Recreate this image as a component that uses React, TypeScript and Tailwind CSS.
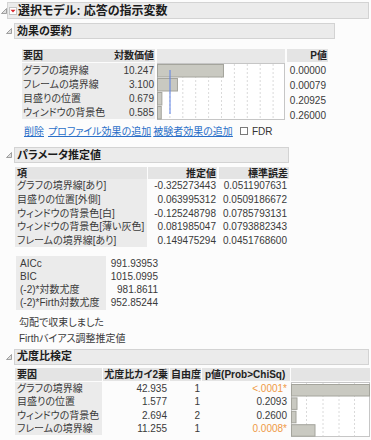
import React from "react";

const FONT =
  "font-['Liberation_Sans','Noto_Sans_CJK_JP',sans-serif] [font-feature-settings:'palt']";

const effects = [
  { name: "グラフの境界線", lw: "10.247", v: 10.247, p: "0.00000" },
  { name: "フレームの境界線", lw: "3.100", v: 3.1, p: "0.00079" },
  { name: "目盛りの位置", lw: "0.679", v: 0.679, p: "0.20925" },
  { name: "ウィンドウの背景色", lw: "0.585", v: 0.585, p: "0.26000" },
];

const params = [
  ["グラフの境界線[あり]", "-0.325273443", "0.0511907631"],
  ["目盛りの位置[外側]", "0.063995312", "0.0509186672"],
  ["ウィンドウの背景色[白]", "-0.125248798", "0.0785793131"],
  ["ウィンドウの背景色[薄い灰色]", "0.081985047", "0.0793882343"],
  ["フレームの境界線[あり]", "0.149475294", "0.0451768600"],
];

const fitStats = [
  ["AICc", "991.93953"],
  ["BIC", "1015.0995"],
  ["(-2)*対数尤度", "981.8611"],
  ["(-2)*Firth対数尤度", "952.85244"],
];

const lrTests = [
  { name: "グラフの境界線", chi: "42.935", df: "1", p: "<.0001*", sig: true, w: 78 },
  { name: "目盛りの位置", chi: "1.577", df: "1", p: "0.2093", sig: false, w: 5.5 },
  { name: "ウィンドウの背景色", chi: "2.694", df: "2", p: "0.2600", sig: false, w: 4.5 },
  { name: "フレームの境界線", chi: "11.255", df: "1", p: "0.0008*", sig: true, w: 23.5 },
];

function Twisty() {
  return (
    <svg width="6" height="6" viewBox="0 0 6 6" className="shrink-0">
      <path d="M5.5 0.5V5.5H0.5Z" fill="#dedede" stroke="#8c8c8c" strokeWidth="0.8" />
    </svg>
  );
}

function RedHotspot() {
  return (
    <svg width="8" height="8" viewBox="0 0 8 8" className="shrink-0">
      <rect x="0.5" y="0.5" width="7" height="7" fill="#fff" stroke="#c4c4c4" />
      <path d="M1.5 2.8H6.5L4 5.6Z" fill="#d8262c" />
    </svg>
  );
}

function Outline({ title, width }: { title: string; width: string }) {
  return (
    <div className="flex items-center ml-[6px]">
      <div className="w-[8px] flex">
        <Twisty />
      </div>
      <div
        className={`h-[16px] ${width} bg-[#ebebeb] border border-[#d3d3d3] flex items-center pl-[2px] font-bold text-[11px] text-[#1c1c1c]`}
      >
        {title}
      </div>
    </div>
  );
}

function EffectChart() {
  const s = 6.44;
  return (
    <svg width="128" height="57" viewBox="0 0 128 57">
      <rect x="0.5" y="0.5" width="127" height="56" fill="#fff" stroke="#c6c6c6" />
      {[1, 2, 3, 4, 5, 6, 7, 8, 9].map((k) => (
        <line
          key={k}
          x1={k * 12.9}
          x2={k * 12.9}
          y1="1"
          y2="56"
          stroke="#d0d0d0"
          strokeWidth="0.8"
          strokeDasharray="2 2"
        />
      ))}
      {effects.map((e, i) => (
        <rect
          key={i}
          x="0.5"
          y={1.5 + i * 14}
          width={e.v * s}
          height="12.5"
          fill="#c9c9c1"
          stroke="#a4a49c"
        />
      ))}
      <line x1="13" x2="13" y1="7" y2="51" stroke="#5b80e6" strokeWidth="1" />
    </svg>
  );
}

function LrChart() {
  return (
    <svg width="79" height="55" viewBox="0 0 79 55">
      <rect x="0.5" y="0.5" width="78" height="54" fill="#fff" stroke="#c6c6c6" />
      {[15.5, 32, 48, 63.5].map((x) => (
        <line
          key={x}
          x1={x}
          x2={x}
          y1="1"
          y2="54"
          stroke="#d0d0d0"
          strokeWidth="0.8"
          strokeDasharray="2 2"
        />
      ))}
      {lrTests.map((r, i) => (
        <rect
          key={i}
          x="0.5"
          y={2.5 + i * 13.4}
          width={r.w}
          height="11.5"
          fill="#c9c9c1"
          stroke="#a4a49c"
        />
      ))}
    </svg>
  );
}

export default function App() {
  return (
    <div
      className={`w-[371px] h-[440px] overflow-hidden whitespace-nowrap bg-[#fcfcfc] text-[10px] text-[#3a3a3a] ${FONT}`}
    >
      {/* title bar */}
      <div className="pt-[2px] flex items-center">
        <div className="w-[7px] flex pl-[1px]">
          <Twisty />
        </div>
        <div className="h-[17px] w-[362px] bg-[#ebebeb] border border-[#d3d3d3] flex items-center gap-[1px] pl-[1px] font-bold text-[12px] text-[#1c1c1c]">
          <RedHotspot />
          <span>選択モデル: 応答の指示変数</span>
        </div>
      </div>

      {/* effect summary */}
      <div className="mt-[4px]">
        <Outline title="効果の要約" width="w-[321px]" />
        <div className="ml-[22px] mt-[10px] flex items-start">
          <div className="w-[133px] flex flex-col gap-[1px]">
            <div className="h-[13px] bg-[#e4e4e4] flex items-center justify-between px-[1px] font-bold text-[#222]">
              <span>要因</span>
              <span>対数価値</span>
            </div>
            <div className="bg-[#ebebeb] flex flex-col">
              {effects.map((e) => (
                <div key={e.name} className="h-[14px] flex items-center justify-between px-[1px]">
                  <span>{e.name}</span>
                  <span>{e.lw}</span>
                </div>
              ))}
            </div>
          </div>
          <div className="ml-[2px] w-[128px] flex flex-col">
            <div className="h-[14px] bg-[#e8e8e8]" />
            <EffectChart />
          </div>
          <div className="ml-[2px] w-[41px] flex flex-col gap-[1px]">
            <div className="h-[13px] bg-[#e4e4e4] flex items-center justify-end pr-[1px] font-bold text-[#222]">
              P値
            </div>
            {effects.map((e) => (
              <div key={e.name} className="h-[14px] flex items-center justify-end pr-[2px]">
                {e.p}
              </div>
            ))}
          </div>
        </div>
        <div className="ml-[24px] mt-[3px] h-[12px] flex items-center text-[#2a6fc8]">
          <span className="underline">削除</span>
          <span className="underline ml-[4px]">プロファイル効果の追加</span>
          <span className="underline ml-[2px]">被験者効果の追加</span>
          <span className="ml-[7px] w-[8px] h-[8px] bg-white border border-[#7a7a7a]" />
          <span className="ml-[4px] text-[#333]">FDR</span>
        </div>
      </div>

      {/* parameter estimates */}
      <div className="mt-[10px]">
        <Outline title="パラメータ推定値" width="w-[275px]" />
        <div className="ml-[15px] mt-[4px] flex flex-col">
          <div className="h-[12px] flex font-bold text-[#222]">
            <div className="w-[132px] bg-[#e4e4e4] flex items-center pl-[2px]">項</div>
            <div className="ml-[1px] w-[69px] bg-[#e4e4e4] flex items-center justify-end pr-[1px]">推定値</div>
            <div className="ml-[2px] w-[70px] bg-[#e4e4e4] flex items-center justify-end pr-[1px]">標準誤差</div>
          </div>
          {params.map((r) => (
            <div key={r[0]} className="h-[13.7px] flex">
              <div className="w-[132px] bg-[#ebebeb] flex items-center pl-[2px]">{r[0]}</div>
              <div className="ml-[1px] w-[69px] flex items-center justify-end pr-[1px]">{r[1]}</div>
              <div className="ml-[2px] w-[70px] flex items-center justify-end pr-[2px]">{r[2]}</div>
            </div>
          ))}
        </div>

        <div className="ml-[16px] mt-[9px] flex flex-col">
          {fitStats.map((r) => (
            <div key={r[0]} className="h-[13.3px] flex">
              <div className="w-[90px] bg-[#ebebeb] flex items-center pl-[4px]">{r[0]}</div>
              <div className="w-[52px] flex items-center justify-end">{r[1]}</div>
            </div>
          ))}
        </div>
        <div className="ml-[19px] mt-[5px] h-[16px] flex items-center">勾配で収束しました</div>
        <div className="ml-[19px] h-[16px] flex items-center">Firthバイアス調整推定値</div>
      </div>

      {/* likelihood ratio tests */}
      <div className="mt-[2px]">
        <Outline title="尤度比検定" width="w-[355px]" />
        <div className="ml-[15px] mt-[3px] flex flex-col">
          <div className="h-[13px] flex font-bold text-[#222]">
            <div className="w-[87px] bg-[#e4e4e4] flex items-center pl-[2px]">要因</div>
            <div className="ml-[1px] w-[66px] bg-[#e4e4e4] flex items-center justify-end pr-[1px]">尤度比カイ2乗</div>
            <div className="ml-[1px] w-[31px] bg-[#e4e4e4] flex items-center justify-end">自由度</div>
            <div className="ml-[1px] w-[88px] bg-[#e4e4e4] flex items-center pl-[3px]">p値(Prob&gt;ChiSq)</div>
            <div className="ml-[1px] w-[79px] bg-[#e4e4e4]" />
          </div>
          <div className="mt-[1px] flex">
            <div className="flex flex-col">
              {lrTests.map((r) => (
                <div key={r.name} className="h-[13.4px] flex">
                  <div className="w-[87px] bg-[#ebebeb] flex items-center pl-[2px]">{r.name}</div>
                  <div className="ml-[1px] w-[66px] flex items-center justify-end pr-[2px]">{r.chi}</div>
                  <div className="ml-[1px] w-[31px] flex items-center justify-end pr-[1px]">{r.df}</div>
                  <div
                    className={`ml-[1px] w-[88px] flex items-center justify-end pr-[3px] ${
                      r.sig ? "text-[#ef9a45]" : ""
                    }`}
                  >
                    {r.p}
                  </div>
                </div>
              ))}
            </div>
            <div className="ml-[1px]">
              <LrChart />
            </div>
          </div>
        </div>
      </div>
    </div>
  );
}
